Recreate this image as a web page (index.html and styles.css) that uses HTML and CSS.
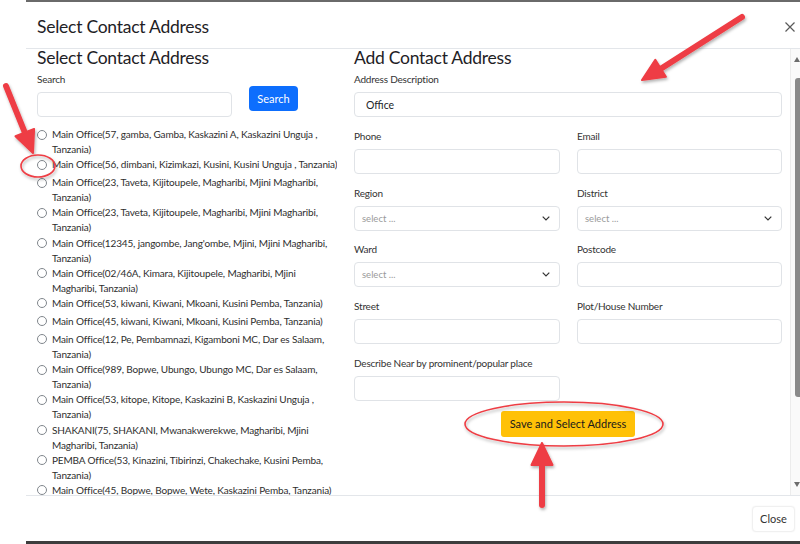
FILE: index.html
```html
<!DOCTYPE html>
<html lang="en">
<head>
<meta charset="utf-8">
<title>Select Contact Address</title>
<link rel="stylesheet" href="styles.css">
</head>
<body>
<div class="screen">
  <div class="modal">
    <div class="modal-header">
      <h1 class="modal-title">Select Contact Address</h1>
      <button class="btn-x" aria-label="Close">
        <svg width="10" height="10" viewBox="0 0 10 10"><path d="M0.5 0.5 L9.5 9.5 M9.5 0.5 L0.5 9.5" stroke="#5a5a5a" stroke-width="1.2" fill="none"/></svg>
      </button>
    </div>
    <div class="modal-body">
      <div class="body-content">
        <div class="col-left">
          <h2 class="section-title">Select Contact Address</h2>
          <div class="search-row">
            <div class="search-field">
              <label class="form-label">Search</label>
              <input class="form-control" type="text">
            </div>
            <button class="btn-primary">Search</button>
          </div>
          <ul class="address-list">
            <li><span class="radio"></span><span class="addr">Main Office(57, gamba, Gamba, Kaskazini A, Kaskazini Unguja ,<br>Tanzania)</span></li>
            <li><span class="radio"></span><span class="addr">Main Office(56, dimbani, Kizimkazi, Kusini, Kusini Unguja , Tanzania)</span></li>
            <li><span class="radio"></span><span class="addr">Main Office(23, Taveta, Kijitoupele, Magharibi, Mjini Magharibi,<br>Tanzania)</span></li>
            <li><span class="radio"></span><span class="addr">Main Office(23, Taveta, Kijitoupele, Magharibi, Mjini Magharibi,<br>Tanzania)</span></li>
            <li><span class="radio"></span><span class="addr">Main Office(12345, jangombe, Jang'ombe, Mjini, Mjini Magharibi,<br>Tanzania)</span></li>
            <li><span class="radio"></span><span class="addr">Main Office(02/46A, Kimara, Kijitoupele, Magharibi, Mjini<br>Magharibi, Tanzania)</span></li>
            <li><span class="radio"></span><span class="addr">Main Office(53, kiwani, Kiwani, Mkoani, Kusini Pemba, Tanzania)</span></li>
            <li><span class="radio"></span><span class="addr">Main Office(45, kiwani, Kiwani, Mkoani, Kusini Pemba, Tanzania)</span></li>
            <li><span class="radio"></span><span class="addr">Main Office(12, Pe, Pembamnazi, Kigamboni MC, Dar es Salaam,<br>Tanzania)</span></li>
            <li><span class="radio"></span><span class="addr">Main Office(989, Bopwe, Ubungo, Ubungo MC, Dar es Salaam,<br>Tanzania)</span></li>
            <li><span class="radio"></span><span class="addr">Main Office(53, kitope, Kitope, Kaskazini B, Kaskazini Unguja ,<br>Tanzania)</span></li>
            <li><span class="radio"></span><span class="addr">SHAKANI(75, SHAKANI, Mwanakwerekwe, Magharibi, Mjini<br>Magharibi, Tanzania)</span></li>
            <li><span class="radio"></span><span class="addr">PEMBA Office(53, Kinazini, Tibirinzi, Chakechake, Kusini Pemba,<br>Tanzania)</span></li>
            <li><span class="radio"></span><span class="addr">Main Office(45, Bopwe, Bopwe, Wete, Kaskazini Pemba, Tanzania)</span></li>
          </ul>
        </div>
        <div class="col-right">
          <h2 class="section-title">Add Contact Address</h2>
          <div class="form-grid">
            <div class="field full">
              <label class="form-label">Address Description</label>
              <input class="form-control value" type="text" value="Office">
            </div>
            <div class="field">
              <label class="form-label">Phone</label>
              <input class="form-control" type="text">
            </div>
            <div class="field">
              <label class="form-label">Email</label>
              <input class="form-control" type="text">
            </div>
            <div class="field">
              <label class="form-label">Region</label>
              <div class="form-select"><span>select ...</span><svg width="8" height="5" viewBox="0 0 8 5"><path d="M0.7 0.7 L4 4 L7.3 0.7" stroke="#333" stroke-width="1.2" fill="none"/></svg></div>
            </div>
            <div class="field">
              <label class="form-label">District</label>
              <div class="form-select"><span>select ...</span><svg width="8" height="5" viewBox="0 0 8 5"><path d="M0.7 0.7 L4 4 L7.3 0.7" stroke="#333" stroke-width="1.2" fill="none"/></svg></div>
            </div>
            <div class="field">
              <label class="form-label">Ward</label>
              <div class="form-select"><span>select ...</span><svg width="8" height="5" viewBox="0 0 8 5"><path d="M0.7 0.7 L4 4 L7.3 0.7" stroke="#333" stroke-width="1.2" fill="none"/></svg></div>
            </div>
            <div class="field">
              <label class="form-label">Postcode</label>
              <input class="form-control" type="text">
            </div>
            <div class="field">
              <label class="form-label">Street</label>
              <input class="form-control" type="text">
            </div>
            <div class="field">
              <label class="form-label">Plot/House Number</label>
              <input class="form-control" type="text">
            </div>
            <div class="field">
              <label class="form-label nowrap">Describe Near by prominent/popular place</label>
              <input class="form-control" type="text">
            </div>
          </div>
          <div class="actions">
            <button class="btn-warning">Save and Select Address</button>
          </div>
        </div>
      </div>
      <div class="scrollbar">
        <span class="sb-up"></span>
        <span class="sb-thumb"></span>
        <span class="sb-down"></span>
      </div>
    </div>
    <div class="modal-footer">
      <button class="btn-light">Close</button>
    </div>
  </div>

  <svg class="annotations" width="800" height="544" viewBox="0 0 800 544">
    <defs>
      <filter id="sh" x="-20%" y="-20%" width="140%" height="140%">
        <feDropShadow dx="1" dy="2" stdDeviation="1.5" flood-color="#000" flood-opacity="0.3"/>
      </filter>
    </defs>
    <g filter="url(#sh)" fill="#ee3e44" stroke="#ee3e44">
      <line x1="742" y1="17" x2="662" y2="68" stroke-width="6" stroke-linecap="round"/>
      <polygon points="642,80 655.3,59.8 665.9,76.8" stroke-width="2" stroke-linejoin="round"/>
      <line x1="6" y1="86" x2="25" y2="133" stroke-width="6" stroke-linecap="round"/>
      <polygon points="33,153 34.1,128.9 15.5,136.3" stroke-width="2" stroke-linejoin="round"/>
      <line x1="542" y1="505" x2="542" y2="464" stroke-width="6" stroke-linecap="round"/>
      <polygon points="542,443 531.5,465 552.5,465" stroke-width="2" stroke-linejoin="round"/>
      <ellipse cx="38" cy="166" rx="17" ry="11" fill="none" stroke-width="1.6"/>
      <ellipse cx="564" cy="424" rx="99" ry="22" fill="none" stroke-width="1.6"/>
    </g>
  </svg>
</div>
</body>
</html>
```

FILE: styles.css
```css
* { box-sizing: border-box; }

html, body {
  margin: 0;
  padding: 0;
}

body {
  width: 800px;
  height: 544px;
  overflow: hidden;
  background: #fff;
  font-family: Lato, "Open Sans", sans-serif;
  color: #212529;
}

.screen {
  position: relative;
  width: 800px;
  height: 544px;
  overflow: hidden;
}

.modal {
  margin-left: 26px;
  width: 774px;
  height: 544px;
  border-top: 2px solid #6a6a6a;
  border-bottom: 3px solid #3d3d3d;
  display: flex;
  flex-direction: column;
  background: #fff;
}

.modal-header {
  flex: none;
  height: 47px;
  border-bottom: 1px solid #e3e6ea;
  display: flex;
  align-items: center;
  justify-content: space-between;
  padding: 0 5px 0 11px;
}

.modal-title {
  margin: 3px 0 0;
  font-size: 17.5px;
  letter-spacing: -0.25px;
  font-weight: 400;
  line-height: 18px;
  color: #1e2125;
}

.btn-x {
  border: 0;
  padding: 0;
  background: none;
  display: flex;
  margin-top: 3px;
}

.modal-body {
  flex: none;
  height: 446px;
  display: flex;
}

.body-content {
  flex: 1;
  display: flex;
  gap: 17px;
  padding-left: 11px;
}

.col-left {
  flex: none;
  width: 300px;
  display: flex;
  flex-direction: column;
}

.col-right {
  flex: none;
  width: 428px;
}

.section-title {
  margin: -1px 0 0;
  font-size: 17.5px;
  letter-spacing: -0.25px;
  font-weight: 400;
  line-height: 20px;
  color: #1e2125;
}

.form-label {
  display: block;
  font-size: 10px;
  letter-spacing: -0.2px;
  line-height: 14px;
  color: #333;
  margin-bottom: 6px;
}

.nowrap {
  white-space: nowrap;
}

.search-row {
  flex: none;
  display: flex;
  gap: 17px;
  margin-top: 4px;
}

.search-field {
  width: 195px;
}

.form-control {
  display: block;
  width: 100%;
  height: 25px;
  border: 1px solid #e0e3e7;
  border-radius: 4px;
  background: #fff;
  font-family: inherit;
  font-size: 10.5px;
  color: #212529;
  padding: 0 11px;
  outline: none;
}

.btn-primary {
  align-self: flex-start;
  margin-top: 14px;
  width: 49px;
  height: 25px;
  border: 0;
  border-radius: 4px;
  background: #0d6efd;
  color: #fff;
  font-family: inherit;
  font-size: 11px;
  padding: 0;
}

.address-list {
  flex: 1;
  min-height: 0;
  overflow: hidden;
  list-style: none;
  margin: 10px 0 0;
  padding: 0;
}

.address-list li {
  display: flex;
  gap: 5px;
  min-height: 18px;
  font-size: 10px;
  letter-spacing: -0.15px;
  line-height: 15.1px;
  color: #2e2e2e;
}

.radio {
  flex: none;
  width: 10px;
  height: 10px;
  margin-top: 2.5px;
  border: 1px solid #80868c;
  border-radius: 50%;
  background: #fff;
}

.addr {
  white-space: nowrap;
}

.form-grid {
  display: grid;
  grid-template-columns: 206px 205px;
  column-gap: 17px;
  row-gap: 11.8px;
  margin-top: 4px;
}

.field.full {
  grid-column: 1 / -1;
}

.form-select {
  height: 25px;
  border: 1px solid #e0e3e7;
  border-radius: 4px;
  background: #fff;
  display: flex;
  align-items: center;
  justify-content: space-between;
  padding: 0 9px 0 7px;
  font-size: 9.5px;
  color: #9a9a9a;
}

.actions {
  display: flex;
  justify-content: center;
  margin-top: 10px;
}

.btn-warning {
  width: 134px;
  height: 26px;
  border: 0;
  border-radius: 3px;
  background: #ffc107;
  color: #1a1a1a;
  font-family: inherit;
  font-size: 11px;
  padding: 0;
}

.scrollbar {
  flex: none;
  width: 10px;
  height: 446px;
  border-left: 1px solid #ececec;
  background: #fafafa;
  display: flex;
  flex-direction: column;
  align-items: flex-end;
  padding: 8px 0;
}

.sb-up {
  width: 0;
  height: 0;
  border-left: 3px solid transparent;
  border-right: 3px solid transparent;
  border-bottom: 5px solid #6d6d6d;
}

.sb-thumb {
  width: 5px;
  height: 319px;
  margin-top: 16px;
  margin-bottom: auto;
  background: #8a8a8a;
  border-radius: 3px 0 0 3px;
}

.sb-down {
  width: 0;
  height: 0;
  border-left: 3px solid transparent;
  border-right: 3px solid transparent;
  border-top: 5px solid #6d6d6d;
}

.modal-footer {
  flex: none;
  height: 46px;
  border-top: 1px solid #e3e6ea;
  display: flex;
  align-items: center;
  justify-content: flex-end;
  padding-right: 5px;
}

.btn-light {
  width: 43px;
  height: 26px;
  border: 1px solid #f0f0f0;
  border-radius: 4px;
  background: #fff;
  box-shadow: 0 0 2px rgba(0, 0, 0, 0.06);
  font-family: inherit;
  font-size: 11px;
  color: #333;
  padding: 0;
}

.annotations {
  position: absolute;
  left: 0;
  top: 0;
  pointer-events: none;
}
```
